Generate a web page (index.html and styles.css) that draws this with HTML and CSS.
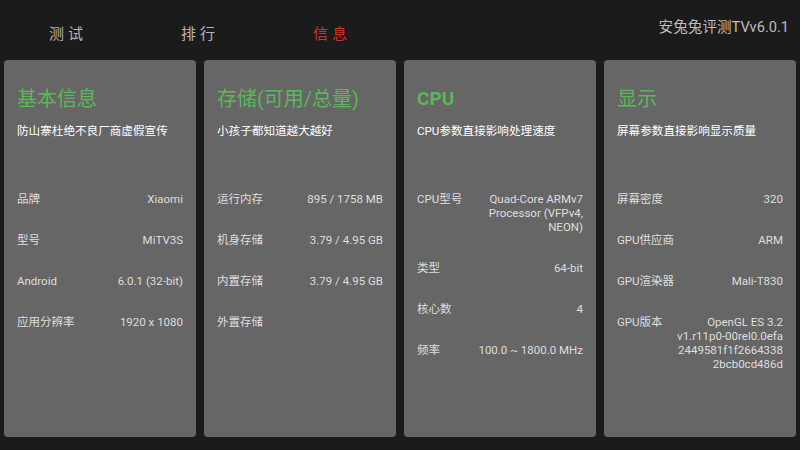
FILE: index.html
```html
<!DOCTYPE html>
<html lang="zh-CN">
<head>
<meta charset="utf-8">
<title>安兔兔评测TV</title>
<link rel="stylesheet" href="styles.css">
</head>
<body>
<div class="screen">
  <header class="topbar">
    <nav class="tabs">
      <div class="tab">测试</div>
      <div class="tab">排行</div>
      <div class="tab active">信息</div>
    </nav>
    <div class="brand">安兔兔评测TVv6.0.1</div>
  </header>
  <main class="cards">
    <section class="card">
      <h2 class="card-title">基本信息</h2>
      <p class="card-sub">防山寨杜绝不良厂商虚假宣传</p>
      <div class="rows">
        <div class="row"><span class="label">品牌</span><span class="value">Xiaomi</span></div>
        <div class="row"><span class="label">型号</span><span class="value">MiTV3S</span></div>
        <div class="row"><span class="label">Android</span><span class="value">6.0.1 (32-bit)</span></div>
        <div class="row"><span class="label">应用分辨率</span><span class="value">1920 x 1080</span></div>
      </div>
    </section>
    <section class="card">
      <h2 class="card-title">存储(可用/总量)</h2>
      <p class="card-sub">小孩子都知道越大越好</p>
      <div class="rows">
        <div class="row"><span class="label">运行内存</span><span class="value">895 / 1758 MB</span></div>
        <div class="row"><span class="label">机身存储</span><span class="value">3.79 / 4.95 GB</span></div>
        <div class="row"><span class="label">内置存储</span><span class="value">3.79 / 4.95 GB</span></div>
        <div class="row"><span class="label">外置存储</span><span class="value"></span></div>
      </div>
    </section>
    <section class="card">
      <h2 class="card-title latin">CPU</h2>
      <p class="card-sub">CPU参数直接影响处理速度</p>
      <div class="rows">
        <div class="row"><span class="label">CPU型号</span><span class="value">Quad-Core ARMv7<br>Processor (VFPv4,<br>NEON)</span></div>
        <div class="row"><span class="label">类型</span><span class="value">64-bit</span></div>
        <div class="row"><span class="label">核心数</span><span class="value">4</span></div>
        <div class="row"><span class="label">频率</span><span class="value">100.0 ~ 1800.0 MHz</span></div>
      </div>
    </section>
    <section class="card">
      <h2 class="card-title">显示</h2>
      <p class="card-sub">屏幕参数直接影响显示质量</p>
      <div class="rows">
        <div class="row"><span class="label">屏幕密度</span><span class="value">320</span></div>
        <div class="row"><span class="label">GPU供应商</span><span class="value">ARM</span></div>
        <div class="row"><span class="label">GPU渲染器</span><span class="value">Mali-T830</span></div>
        <div class="row"><span class="label">GPU版本</span><span class="value">OpenGL ES 3.2<br>v1.r11p0-00rel0.0efa<br>2449581f1f2664338<br>2bcb0cd486d</span></div>
      </div>
    </section>
  </main>
</div>
</body>
</html>
```

FILE: styles.css
```css
* {
  box-sizing: border-box;
}

html, body {
  margin: 0;
  padding: 0;
  background: #1b1b1b;
}

body {
  font-family: Roboto, "Noto Sans CJK SC", sans-serif;
}

.screen {
  width: 800px;
  height: 450px;
  overflow: hidden;
  display: flex;
  flex-direction: column;
}

.topbar {
  height: 60px;
  display: flex;
  justify-content: space-between;
  align-items: flex-start;
}

.tabs {
  display: flex;
  padding-top: 24px;
}

.tab {
  width: 132px;
  text-align: center;
  font-size: 15px;
  line-height: 20px;
  letter-spacing: 4px;
  text-indent: 4px;
  color: #b4b4b4;
}

.tab.active {
  color: #cf3426;
}

.brand {
  padding-top: 18px;
  padding-right: 11px;
  font-family: Roboto, "Noto Sans CJK SC", sans-serif;
  font-size: 14.6px;
  line-height: 18px;
  color: #bdbdbd;
}

.cards {
  display: grid;
  grid-template-columns: repeat(4, 192px);
  gap: 8px;
  padding: 0 4px;
}

.card {
  height: 377px;
  background: #666666;
  border-radius: 4px;
  padding: 0 13px;
}

.card-title {
  margin: 27px 0 0;
  font-size: 20px;
  line-height: 24px;
  font-weight: normal;
  color: #5ab75a;
}

.card-title.latin {
  font-weight: bold;
  font-size: 19px;
}

.card-sub {
  margin: 13px 0 0;
  font-size: 11.6px;
  line-height: 14px;
  color: #ffffff;
}

.rows {
  margin-top: 55px;
  display: flex;
  flex-direction: column;
  gap: 27.3px;
}

.row {
  display: flex;
  justify-content: space-between;
  align-items: flex-start;
  font-size: 11.5px;
  line-height: 13.8px;
  color: #dedede;
}

.label {
  white-space: nowrap;
}

.value {
  text-align: right;
  white-space: nowrap;
}
```
